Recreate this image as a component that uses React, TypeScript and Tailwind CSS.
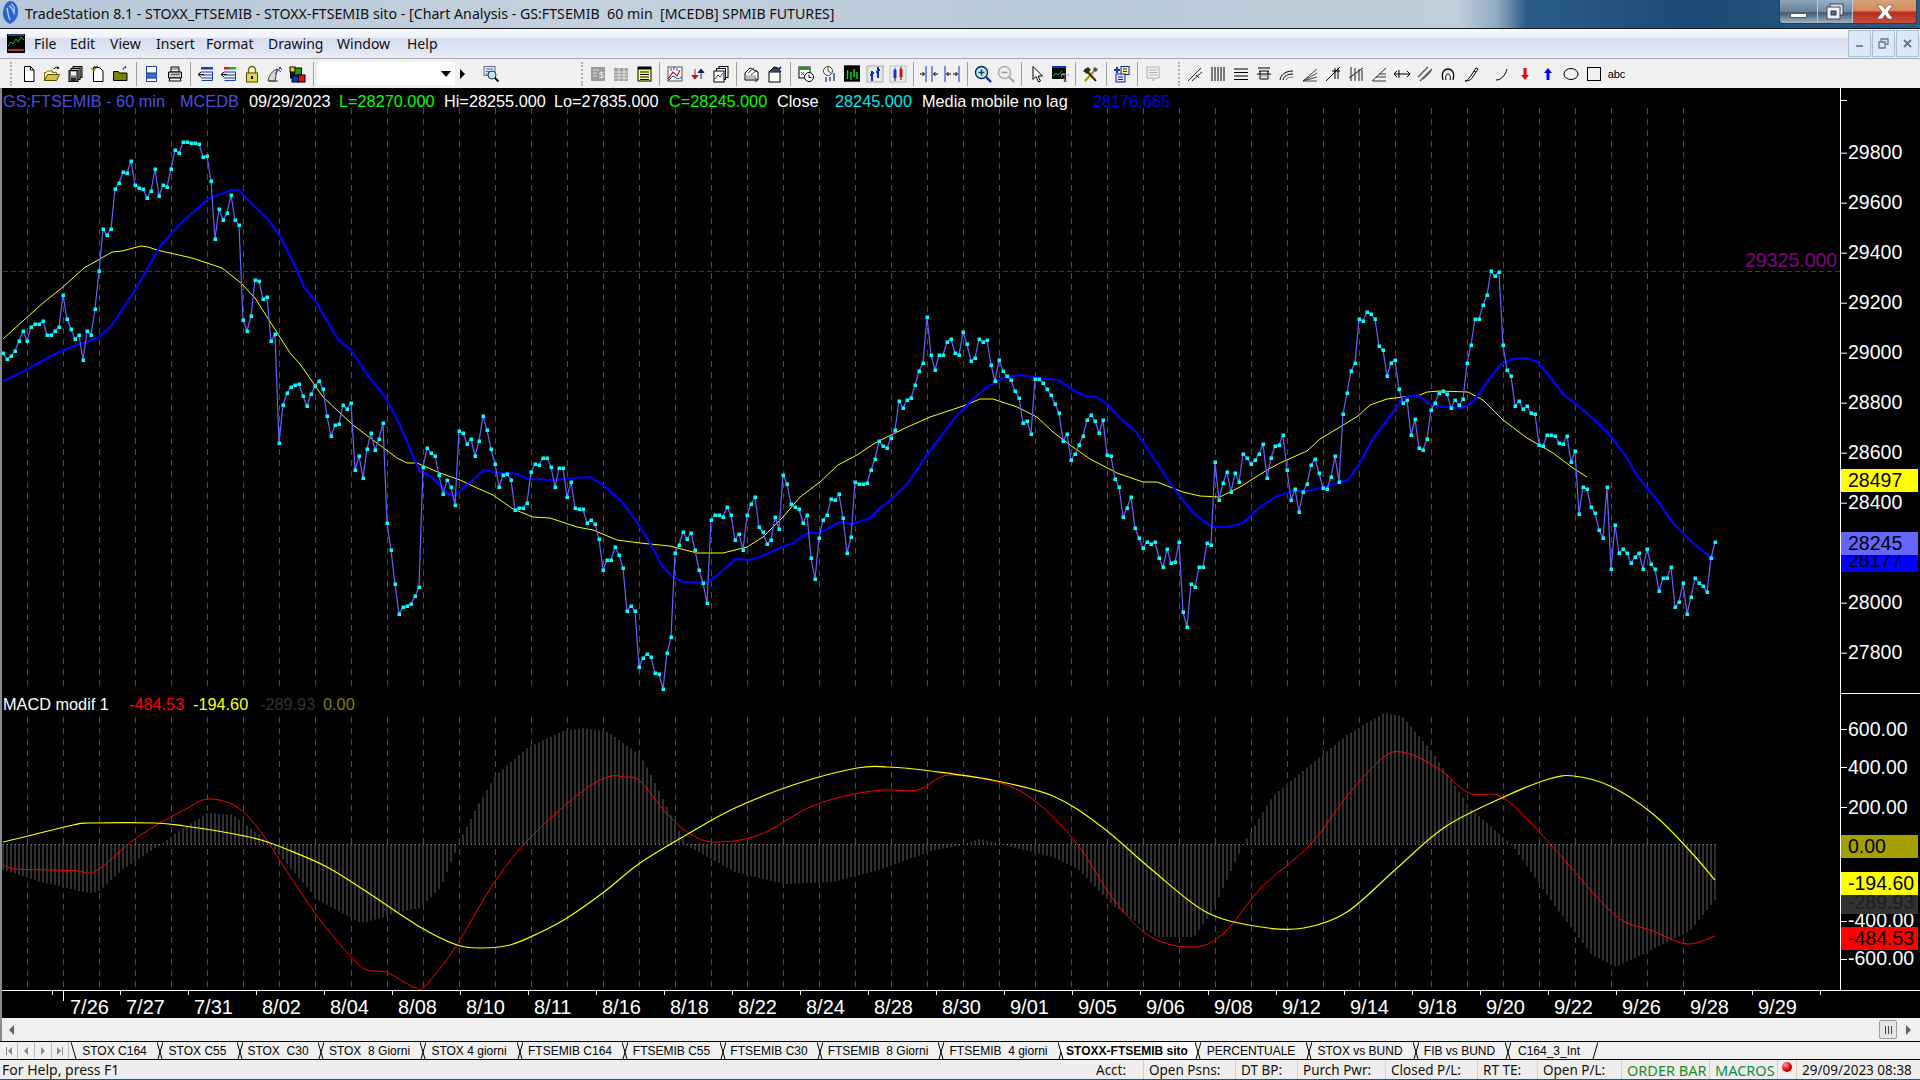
import type { ReactNode } from 'react';

type Pt = [number, number];

// close values, one per bar (bar spacing 4px, first bar at x=3), already in page y
const closes = [
  353,359,356,351,341,331,341,327,324,324,
  321,335,335,331,327,295,319,329,339,335,
  360,331,335,309,271,229,235,229,189,183,
  172,173,161,185,188,189,198,191,169,196,
  185,187,169,150,153,142,142,143,143,144,
  157,156,181,239,209,220,213,195,220,225,
  320,331,316,280,281,299,297,341,334,443,
  405,393,387,385,384,396,406,394,386,381,
  389,416,436,425,424,405,409,403,470,456,
  478,449,433,450,439,423,523,550,584,614,
  607,606,604,596,587,467,448,453,456,475,
  494,480,487,505,431,433,444,439,456,441,
  416,430,449,464,487,475,474,480,510,508,
  508,503,472,464,465,458,458,467,487,468,
  468,497,482,508,509,509,523,520,524,539,
  570,560,560,547,555,568,611,606,611,667,
  658,654,657,673,674,689,653,637,553,545,
  532,539,533,550,570,583,603,520,515,515,
  517,507,515,540,534,550,515,504,497,527,
  532,544,540,517,529,475,484,504,507,509,
  523,515,558,579,538,520,515,499,500,494,
  518,553,537,482,484,484,483,470,459,441,
  446,448,438,430,401,408,400,398,385,371,
  363,317,355,370,355,355,342,339,353,355,
  332,344,361,358,339,342,340,365,381,360,
  371,376,380,391,398,423,421,434,379,379,
  383,389,395,404,413,441,434,460,454,445,
  436,420,415,421,433,420,455,456,479,487,
  517,508,497,528,538,548,542,544,542,558,
  567,549,563,562,542,612,627,584,587,567,
  567,543,545,462,500,483,472,492,473,482,
  454,458,464,460,454,444,478,458,446,445,
  435,470,500,489,512,492,484,465,459,473,
  488,489,477,456,482,414,393,371,363,319,
  321,312,314,319,346,350,376,363,360,389,
  403,400,435,419,448,450,439,410,403,393,
  391,394,408,400,405,399,363,345,319,319,
  305,295,271,276,272,345,370,376,406,401,
  409,406,413,414,445,446,435,435,436,443,
  444,436,462,451,514,487,489,507,513,530,
  538,487,569,525,553,549,553,563,557,553,
  569,549,564,569,591,578,578,567,607,602,
  583,614,597,578,583,586,592,558,542,
];

const blueMa: Pt[] = [[3,381],[12,377],[26,370],[53,355],[71,347],[98,338],[112,325],[135,290],[161,245],[182,222],[208,199],[231,190],[239,190],[253,205],[267,218],[278,233],[294,263],[304,287],[316,302],[339,341],[351,350],[367,374],[385,397],[400,425],[419,470],[433,478],[447,493],[454,496],[467,485],[484,470],[500,473],[518,474],[527,479],[553,480],[572,478],[590,477],[603,485],[622,502],[637,522],[650,543],[663,567],[673,577],[683,582],[707,583],[720,573],[735,559],[750,560],[767,554],[780,548],[793,543],[808,533],[820,533],[840,522],[852,524],[870,518],[880,508],[893,498],[907,484],[927,455],[953,420],[970,402],[987,387],[1003,378],[1020,375],[1040,378],[1058,380],[1073,390],[1085,396],[1097,397],[1107,404],[1120,418],[1137,433],[1153,457],[1173,487],[1193,513],[1212,527],[1227,527],[1243,523],[1260,507],[1277,496],[1293,491],[1310,491],[1323,487],[1348,480],[1360,463],[1372,440],[1387,420],[1403,398],[1417,395],[1428,403],[1443,407],[1462,408],[1473,402],[1487,382],[1500,365],[1512,359],[1527,358],[1537,362],[1550,377],[1563,394],[1577,405],[1597,422],[1610,435],[1627,458],[1638,477],[1657,500],[1673,523],[1693,543],[1710,557],[1715,558]];

const yellowMa: Pt[] = [[3,339],[24,320],[43,303],[63,287],[84,268],[112,252],[122,251],[141,246],[148,247],[157,250],[192,258],[222,268],[241,283],[255,298],[269,320],[290,353],[300,364],[323,397],[353,425],[377,443],[397,458],[407,463],[417,463],[440,473],[460,480],[477,488],[493,495],[513,509],[533,517],[550,518],[577,527],[593,530],[617,540],[640,543],[670,546],[697,553],[723,553],[747,547],[763,537],[783,517],[800,497],[820,482],[838,465],[857,455],[875,443],[903,429],[930,417],[963,406],[980,399],[993,399],[1017,407],[1037,417],[1053,432],[1070,445],[1090,459],[1117,473],[1143,482],[1157,482],[1183,492],[1200,496],[1220,497],[1240,487],[1267,470],[1280,463],[1307,451],[1320,439],[1340,427],[1358,416],[1370,405],[1387,399],[1403,397],[1420,395],[1427,392],[1440,391],[1468,392],[1483,400],[1503,420],[1527,438],[1553,453],[1573,468],[1587,477]];

const histEnv: Pt[] = [[3,870],[41,882],[88,893],[98,892],[122,870],[163,843],[180,830],[208,813],[233,815],[249,827],[269,843],[286,863],[318,900],[359,922],[367,922],[400,912],[420,908],[441,887],[459,843],[478,805],[496,775],[527,748],[563,731],[584,728],[608,732],[640,755],[649,771],[686,845],[735,872],[784,884],[833,882],[882,869],[931,851],[961,845],[980,839],[1004,845],[1053,857],[1078,869],[1114,906],[1157,937],[1194,937],[1212,912],[1243,845],[1273,796],[1310,765],[1347,735],[1384,713],[1402,716],[1433,753],[1470,808],[1512,845],[1555,906],[1592,955],[1616,967],[1653,949],[1690,931],[1715,900]];

const macdRed: Pt[] = [[3,865],[16,869],[53,870],[78,871],[90,873],[102,867],[131,842],[155,826],[184,810],[208,799],[237,807],[261,832],[286,870],[318,917],[351,957],[367,970],[386,972],[404,982],[416,988],[424,987],[445,962],[461,938],[496,880],[531,837],[580,793],[608,777],[624,777],[640,781],[667,814],[692,835],[716,842],[759,835],[808,808],[845,796],[882,790],[918,790],[949,775],[1004,784],[1041,806],[1078,845],[1114,900],[1151,937],[1194,947],[1224,933],[1261,888],[1310,845],[1347,796],[1384,757],[1406,753],[1439,769],[1469,793],[1500,796],[1531,823],[1567,863],[1616,916],[1653,931],[1687,944],[1715,936]];

const macdYellow: Pt[] = [[3,842],[24,837],[73,825],[90,823],[155,823],[184,826],[229,833],[261,840],[286,849],[327,867],[367,892],[420,927],[457,945],[482,948],[510,945],[539,933],[567,918],[604,892],[640,863],[686,835],[735,808],[796,784],[857,768],[888,767],[931,771],[992,780],[1053,796],[1102,827],[1151,869],[1206,912],[1261,927],[1304,928],[1347,912],[1396,869],[1445,827],[1506,796],[1549,779],[1574,776],[1610,786],[1653,814],[1690,851],[1715,880]];

const toPoints = (p: Pt[]) => p.map(([x, y]) => `${x},${y}`).join(' ');

// catmull-rom through the traced points, the macd lines have no corners
function smooth(p: Pt[]) {
  let d = `M${p[0][0]} ${p[0][1]}`;
  for (let i = 0; i < p.length - 1; i++) {
    const a = p[Math.max(i - 1, 0)];
    const b = p[i];
    const c = p[i + 1];
    const e = p[Math.min(i + 2, p.length - 1)];
    const c1x = b[0] + (c[0] - a[0]) / 6;
    const c1y = b[1] + (c[1] - a[1]) / 6;
    const c2x = c[0] - (e[0] - b[0]) / 6;
    const c2y = c[1] - (e[1] - b[1]) / 6;
    d += `C${c1x.toFixed(1)} ${c1y.toFixed(1)} ${c2x.toFixed(1)} ${c2y.toFixed(1)} ${c[0]} ${c[1]}`;
  }
  return d;
}

function interp(p: Pt[], x: number) {
  for (let i = 1; i < p.length; i++) {
    if (x <= p[i][0]) {
      const [x0, y0] = p[i - 1];
      const [x1, y1] = p[i];
      return y0 + ((y1 - y0) * (x - x0)) / (x1 - x0);
    }
  }
  return p[p.length - 1][1];
}

const barX = (i: number) => 3 + i * 4;
const zeroY = 844;
const gridXs = Array.from({ length: 47 }, (_, i) => 27 + i * 36);
const dateTicks = [52, ...Array.from({ length: 26 }, (_, i) => 120 + i * 68)];

const dates = ['7/27','7/31','8/02','8/04','8/08','8/10','8/11','8/16','8/18','8/22','8/24','8/28','8/30','9/01','9/05','9/06','9/08','9/12','9/14','9/18','9/20','9/22','9/26','9/28','9/29'];

function ChartDrawing() {
  const closeLine = closes.map((y, i) => `${barX(i)},${y}`).join(' ');
  const dots = closes.map((y, i) => `M${barX(i) - 1.5} ${y - 1.5}h3.5v3.5h-3.5z`).join('');
  const hist = Array.from({ length: 429 }, (_, i) => {
    const x = barX(i);
    return `M${x} ${zeroY}V${interp(histEnv, x).toFixed(1)}`;
  }).join('');
  return (
    <svg className="absolute inset-0" width={1920} height={930} viewBox="0 88 1920 930">
      <g stroke="#4a4a4a" strokeWidth={1} strokeDasharray="6 5">
        {gridXs.map((x) => (
          <g key={x}>
            <line x1={x + 0.5} x2={x + 0.5} y1={108} y2={690} />
            <line x1={x + 0.5} x2={x + 0.5} y1={717} y2={987} />
          </g>
        ))}
      </g>
      <line x1={3} x2={1840} y1={271.5} y2={271.5} stroke="#7c0f7c" strokeDasharray="5 3" />
      <polyline points={toPoints(yellowMa)} fill="none" stroke="#ffff00" strokeWidth={1} />
      <polyline points={toPoints(blueMa)} fill="none" stroke="#0000ff" strokeWidth={2.2} />
      <polyline points={closeLine} fill="none" stroke="#6464ff" strokeWidth={1.2} />
      <path d={dots} fill="#00ffff" />

      <path d={hist} stroke="#303030" strokeWidth={2} fill="none" />
      <line x1={3} x2={1717} y1={zeroY + 0.5} y2={zeroY + 0.5} stroke="#a0a000" strokeDasharray="1 3" />
      <path d={smooth(macdRed)} fill="none" stroke="#ff0000" strokeWidth={1} />
      <path d={smooth(macdYellow)} fill="none" stroke="#ffff00" strokeWidth={1.2} />

      <line x1={1840.5} x2={1840.5} y1={88} y2={990} stroke="#fff" />
      <line x1={1840} x2={1920} y1={693.5} y2={693.5} stroke="#fff" />
      <line x1={2} x2={1920} y1={990.5} y2={990.5} stroke="#fff" />
      <g stroke="#fff">
        {[152.7, 202.7, 252.7, 302.7, 352.7, 402.7, 452.7, 502.7, 602.7, 652.7, 729, 767, 807, 921, 959, 100].map((y) => (
          <line key={y} x1={1841} x2={1847} y1={y + 0.5} y2={y + 0.5} />
        ))}
        {dateTicks.map((x) => (
          <line key={x} x1={x + 0.5} x2={x + 0.5} y1={990} y2={995} />
        ))}
        <line x1={63.5} x2={63.5} y1={990} y2={1001} />
      </g>
    </svg>
  );
}

type AxisLabel = { y: number; t: string; bg?: string; fg?: string };

// drawn in this order, so later boxes clip the ones before them
const axisLabels: AxisLabel[] = [
  { y: 152.7, t: '29800' },{ y: 202.7, t: '29600' },{ y: 252.7, t: '29400' },{ y: 302.7, t: '29200' },
  { y: 352.7, t: '29000' },{ y: 402.7, t: '28800' },{ y: 452.7, t: '28600' },{ y: 502.7, t: '28400' },
  { y: 602.7, t: '28000' },{ y: 652.7, t: '27800' },
  { y: 480.5, t: '28497', bg: '#ffff00', fg: '#000' },
  { y: 560.5, t: '28177', bg: '#0000ff', fg: '#000' },
  { y: 543.5, t: '28245', bg: '#6666ff', fg: '#000' },
  { y: 729, t: '600.00' },{ y: 767, t: '400.00' },{ y: 807, t: '200.00' },
  { y: 920.5, t: '-400.00' },{ y: 958.5, t: '-600.00' },
  { y: 846.5, t: '0.00', bg: '#a3a000', fg: '#000' },
  { y: 902.5, t: '-289.93', bg: '#333333', fg: '#1c1c1c' },
  { y: 883.5, t: '-194.60', bg: '#ffff00', fg: '#000' },
  { y: 938.5, t: '-484.53', bg: '#ff0000', fg: '#000' },
];

function AxisLabels() {
  return (
    <>
      {axisLabels.map((l) => (
        <div
          key={l.t}
          className="absolute left-[1841px] w-[77px] h-[23px] pl-[7px] text-[19.5px] leading-[23px] whitespace-nowrap"
          style={{ top: l.y - 11.5 - 88, background: l.bg, color: l.fg ?? '#fff' }}
        >
          {l.t}
        </div>
      ))}
    </>
  );
}

const mainLegend: [string, string, string][] = [
  ['GS:FTSEMIB - 60 min', '#4a50dc', 'w-[177px]'],
  ['MCEDB', '#4a50dc', 'w-[69px]'],
  ['09/29/2023', '#ffffff', 'w-[90px]'],
  ['L=28270.000', '#00ff00', 'w-[105px]'],
  ['Hi=28255.000', '#ffffff', 'w-[110px]'],
  ['Lo=27835.000', '#ffffff', 'w-[115px]'],
  ['C=28245.000', '#00ff00', 'w-[108px]'],
  ['Close', '#ffffff', 'w-[58px]'],
  ['28245.000', '#00e8e8', 'w-[87px]'],
  ['Media mobile no lag', '#ffffff', 'w-[171px]'],
  ['28176.665', '#0000e6', 'w-[90px]'],
];

const macdLegend: [string, string, string][] = [
  ['MACD modif 1', '#ffffff', 'w-[126px]'],
  ['-484.53', '#ff0000', 'w-[64px]'],
  ['-194.60', '#ffff00', 'w-[67px]'],
  ['-289.93', '#333333', 'w-[63px]'],
  ['0.00', '#808000', 'w-[40px]'],
];

function Legend({ items, top }: { items: [string, string, string][]; top: string }) {
  return (
    <div className={`absolute left-[3px] flex text-[16.3px] leading-[20px] whitespace-nowrap ${top}`}>
      {items.map(([t, c, w]) => (
        <span key={t} className={w} style={{ color: c }}>
          {t}
        </span>
      ))}
    </div>
  );
}

const S = { stroke: '#000', fill: 'none' };

const icons: Record<string, ReactNode> = {
  newDoc: <><path d="M4.5 1.5h6l3.5 3.5v11.500h-9.500z" fill="#fff" stroke="#000" /><path d="M10.500 1.500v3.500h3.500" {...S} /></>,
  open: <><path d="M1.500 15.500v-8h2l1-1.500h5v1.500h4v2" fill="#fff8c0" stroke="#7a6a00" /><path d="M1.500 15.500l3-6h12l-3 6z" fill="#d8c040" stroke="#5a4a00" /><path d="M11 4c1-2 3-2 5-1m0 0l-1.500-1.500m1.500 1.500l-2 .5" {...S} /></>,
  copies: <><rect x="7" y="1.500" width="9" height="11" fill="#999" stroke="#000" /><rect x="5" y="3.500" width="9" height="11" fill="#bbb" stroke="#000" /><rect x="3" y="5.500" width="9" height="11" fill="#777" stroke="#000" /><rect x="5" y="6.500" width="5" height="4" fill="#eee" /><rect x="5" y="13" width="5" height="3.500" fill="#222" /></>,
  checkDoc: <><path d="M4.500 2.500h6l3.500 3.500v10.500h-9.500z" fill="#fff" stroke="#000" /><path d="M2 3l3 2.500 3-4" stroke="#a09000" strokeWidth={1.5} fill="none" /><path d="M5 2h4" stroke="#000" /></>,
  olive: <><path d="M1.500 15.500v-9h5l1 1.500h7.500v7.500z" fill="#808000" stroke="#000" /><path d="M11 5c0-2 1-3 3-3l-1 -1m1 1l-1 1.500" stroke="#1030a0" fill="none" /></>,
  preview: <><path d="M3.500 1.500h10v15h-10z" fill="#fff" stroke="#1a3fa0" /><rect x="3.500" y="8" width="10" height="5" fill="#2f6fd8" /><path d="M3.500 8h10M3.500 13h10" stroke="#123080" /></>,
  print: <><path d="M5 2h8v5h-8z" fill="#fff" stroke="#000" /><path d="M2.500 7h13v6h-13z" fill="#c8c8c8" stroke="#000" /><path d="M4 13l-1 3h12l-1-3z" fill="#fff" stroke="#000" /><path d="M5 4h8M5 9.500h8" stroke="#555" /><rect x="12" y="8" width="2" height="1" fill="#d0a000" /></>,
  winBack: <><rect x="4" y="2" width="12" height="2.500" fill="#1a3fb0" /><path d="M4 7h12M4 10h12M4 13h12" stroke="#1a3fb0" /><path d="M15.500 7v8.500h-11" stroke="#1a3fb0" fill="none" /><path d="M1 9.500h6M1 9.500l3-2.500M1 9.500l3 2.500" stroke="#000" fill="none" /></>,
  winColor: <><rect x="4" y="2" width="6" height="2.500" fill="#e02020" /><rect x="10" y="2" width="6" height="2.500" fill="#20b020" /><path d="M4 7h12M4 10h12M4 13h12" stroke="#1a3fb0" /><path d="M15.500 7v8.500h-11" stroke="#1a3fb0" fill="none" /><path d="M1 9.500h6M1 9.500l3-2.500M1 9.500l3 2.500" stroke="#000" fill="none" /></>,
  lock: <><path d="M5.500 8v-3a3.500 3.500 0 0 1 7 0v3" stroke="#707000" strokeWidth={1.5} fill="none" /><rect x="3.500" y="8" width="11" height="9" fill="#e6d840" stroke="#505000" /><rect x="8" y="11" width="2" height="3" fill="#000" /></>,
  dish: <><path d="M2 16c1-6 4-10 9-12l-2 12z" fill="#d8d8d8" stroke="#444" /><path d="M9 9l6-7M11 4l4 3M13 2l3 3" stroke="#1a3fa0" fill="none" /><path d="M3 16h9" stroke="#333" /></>,
  cubes: <><rect x="1.500" y="7" width="6" height="6" fill="#101060" stroke="#000" /><rect x="5.500" y="3" width="7" height="7" fill="#18a018" stroke="#000" /><rect x="1" y="2" width="5" height="5" fill="#f0d000" stroke="#000" /><rect x="9" y="10" width="7" height="7" fill="#e01010" stroke="#000" /><rect x="3" y="11" width="6.500" height="6" fill="#1030d0" stroke="#000" /></>,
  report: <><rect x="2" y="1.500" width="11" height="9" fill="#dde6f5" stroke="#607090" /><path d="M4 4h7M4 6.500h7M4 9h4" stroke="#5a6a90" /><circle cx="10" cy="10" r="4" fill="#bfe8f5" stroke="#203060" /><path d="M13 13l3.500 3.500" stroke="#000" strokeWidth={2} /></>,
  calcG: <><rect x="2" y="2" width="14" height="14" fill="#9a9a9a" /><path d="M4 5h6M4 8h4M4 11h4" stroke="#ddd" /><text x="10" y="13" fontSize="9" fill="#eee">$</text></>,
  tableG: <><rect x="2" y="3" width="14" height="13" fill="#a0a0a0" /><path d="M2 7h14M2 10h14M2 13h14M7 3v13M12 3v13" stroke="#e4e4e4" /></>,
  sheet: <><rect x="3" y="2" width="13" height="14" fill="#ffff80" stroke="#000" /><rect x="3" y="2" width="13" height="2.500" fill="#000" /><path d="M5 7h9M5 9.500h9M5 12h9M5 14.500h9" stroke="#000" /></>,
  hatLine: <><rect x="2" y="2" width="14" height="14" fill="#fff" stroke="#555" /><path d="M2 14l5-7 4 4 3-6" stroke="#c02020" fill="none" strokeWidth={1.3} /><path d="M2 16l5-5 5 3 4-2" stroke="#1a3fa0" fill="none" /><path d="M5 3v3M8 2v3M11 3v3" stroke="#2040c0" /></>,
  updown: <><path d="M6 4v9M3 10.500l3 3.500 3-3.500z" stroke="#c01010" fill="#c01010" /><path d="M12 14v-9M9 7.500l3-3.500 3 3.500z" stroke="#102080" fill="#102080" /></>,
  stacked: <><rect x="7" y="1.500" width="9" height="11" fill="#fff" stroke="#000" /><rect x="4.500" y="3.500" width="9" height="11" fill="#fff" stroke="#000" /><rect x="2" y="6" width="10" height="11" fill="#fff" stroke="#000" /><path d="M3 14l3-4 2 2 3-4" stroke="#1a3fa0" fill="none" /></>,
  pageEdit: <><path d="M2 8l5-5 8 4v8h-13z" fill="#fff" stroke="#000" /><path d="M5 8l6-5M8 10l6-5" stroke="#444" /><path d="M3 11h10M3 13h10" stroke="#777" /><path d="M12 13l3 2-3 2" stroke="#1a3fa0" fill="none" /></>,
  flagDoc: <><rect x="3" y="7" width="11" height="10" fill="#fff" stroke="#000" /><path d="M3 7l5-5 4 1 3 4" fill="#444" stroke="#000" /><path d="M11 6l4-4" stroke="#1a3fa0" strokeWidth={2} /></>,
  calendar: <><rect x="2" y="2" width="11" height="11" fill="#fff" stroke="#000" /><rect x="2" y="2" width="11" height="3" fill="#18a018" /><path d="M4 7l3 3M7 7l-3 3" stroke="#d01010" /><circle cx="12" cy="12" r="4.500" fill="#fff" stroke="#000" /><path d="M12 9.500v3h2.500" {...S} /></>,
  probe: <><circle cx="8" cy="6" r="4.500" fill="#fff" stroke="#444" /><path d="M8 6V2M8 6l3 2" stroke="#444" /><path d="M6 12v5M10 12v4M14 8v8" stroke="#3050a0" strokeWidth={1.5} /></>,
  blackChart: <><rect x="1" y="1" width="16" height="16" fill="#000" /><path d="M4.500 5v9M8 7v8M11 4v8M14 7v7" stroke="#10e010" strokeWidth={1.4} /><path d="M1 16.500h16M1 .500h16" stroke="#e01010" /></>,
  blueBars: <><rect x="1" y="1" width="16" height="16" fill="#e8e8e8" stroke="#aaa" /><path d="M6 6v10M4 10h2M6 8h2M12 2v11M10 7h2M12 5h2" stroke="#1030b0" strokeWidth={2} /></>,
  candles: <><rect x="1" y="1" width="16" height="16" fill="#ececec" stroke="#bbb" /><path d="M6 3v13M12 2v13" stroke="#111" /><rect x="4.500" y="5" width="3" height="8" fill="#1030d0" /><rect x="10.500" y="4" width="3" height="8" fill="#d01010" /></>,
  arrowsIn: <><path d="M6 1v16M12 1v16" stroke="#1030c0" /><path d="M0 9h4.500M4.500 9l-2-2M4.500 9l-2 2M18 9h-4.500M13.500 9l2-2M13.500 9l2 2" stroke="#000" fill="none" /></>,
  arrowsOut: <><path d="M2 1v16M16 1v16" stroke="#1030c0" /><path d="M8 9h-4.500M3.500 9l2-2M3.500 9l2 2M10 9h4.500M14.500 9l-2-2M14.500 9l-2 2" stroke="#000" fill="none" /></>,
  zoomIn: <><circle cx="7.500" cy="7.500" r="6" fill="#bfe8f5" stroke="#102050" strokeWidth={1.4} /><path d="M4.500 7.500h6M7.500 4.500v6" stroke="#005050" strokeWidth={1.5} /><path d="M12 12l5 5" stroke="#1030a0" strokeWidth={2.4} /></>,
  zoomOut: <><circle cx="7.500" cy="7.500" r="6" fill="#eee" stroke="#aaa" strokeWidth={1.4} /><path d="M4.500 7.500h6" stroke="#999" strokeWidth={1.5} /><path d="M12 12l5 5" stroke="#aaa" strokeWidth={2.4} /></>,
  cursor: <path d="M5 1.500v13l3-3 2.500 5.500 2-1-2.500-5h4.500z" fill="#fff" stroke="#000" />,
  chartT: <><rect x="1" y="1" width="14" height="13" fill="#000" /><rect x="1" y="1" width="14" height="2" fill="#1030e0" /><path d="M2 11l3-3 2 2 4-4" stroke="#10d010" fill="none" /><text x="10" y="17" fontSize="12" fontWeight="700" fontFamily="Liberation Serif, serif" fill="#000" stroke="#fff" strokeWidth={0.3}>T</text></>,
  tools: <><path d="M3 16L14 4" stroke="#c09000" strokeWidth={2.4} /><path d="M3 4l11 12" stroke="#303000" strokeWidth={2} /><path d="M1 6l5-4 3 3-4 4z" fill="#303000" /><path d="M12 2l4 2-2 3-3-2z" fill="#505050" /></>,
  flagBlue: <><rect x="8" y="1.500" width="8" height="8" fill="#fff48c" stroke="#102080" /><path d="M10 4h4M10 6.500h4" stroke="#102080" /><path d="M1 5h6M4 2v6" stroke="#1030e0" strokeWidth={2} /><rect x="3" y="9" width="9" height="8" fill="#d6e4f8" stroke="#102080" /><path d="M5 12h5M5 14.500h5" stroke="#102080" /></>,
  bubbleG: <><path d="M3 2h12v11h-4l-2 3v-3h-6z" fill="#f4f4f4" stroke="#aaa" /><path d="M5 5h8M5 7.500h8M5 10h8" stroke="#aaa" /></>,
  trend: <><path d="M2 16L15 3M6 16L16 7" stroke="#222" /><path d="M10 10l3 3" stroke="#222" /></>,
  vlines: <path d="M3 2v14M6 2v14M9 2v14M12 2v14M15 2v14" stroke="#000" />,
  hlines: <path d="M2 4h14M2 7.500h14M2 11h14M2 14.500h14" stroke="#000" />,
  boxes: <><path d="M3 3h12M4 6h10M2 9h14" stroke="#000" /><path d="M5 6v8h8v-8" stroke="#000" fill="none" /><path d="M5 11h8" stroke="#888" /></>,
  arcs: <><path d="M2 15c1-6 6-9 13-9" stroke="#000" fill="none" /><path d="M5 15c1-4 4-6 10-6" stroke="#000" fill="none" /><path d="M8 15c1-2 3-3 7-3" stroke="#777" fill="none" /></>,
  fan: <path d="M2 16L16 4M2 16L16 8M2 16L16 12M2 16h14" stroke="#444" fill="none" />,
  steps: <path d="M2 16L16 2M11 3v11M14 3v11M8 6h8" stroke="#000" fill="none" />,
  vfan: <path d="M4 2v14M8 3v13M12 4v12M15 5v11M2 13L16 3" stroke="#222" fill="none" />,
  fib: <path d="M2 16L16 3M3 16h13M6 12h10M9 9h7" stroke="#333" fill="none" />,
  hArrow: <path d="M1 9h16M1 9l3-3M1 9l3 3M17 9l-3-3M17 9l-3 3M6 5v8" stroke="#000" fill="none" />,
  channel: <path d="M2 12L12 2M4 16L16 4M7 14L15 6" stroke="#555" strokeWidth={1.4} fill="none" />,
  horse: <><path d="M4 15c-2-5 0-11 5-11s7 6 5 11" stroke="#000" fill="none" strokeWidth={1.3} /><path d="M7 15c-1-3 0-6 2-6s3 3 2 6" stroke="#000" fill="none" /></>,
  pen: <><path d="M3 16c3 0 3-3 5-4l6-9 2 1-6 9c-1 2-4 3-7 3z" fill="#fff" stroke="#000" /><path d="M12 6l2 1" stroke="#000" /></>,
  curve: <path d="M3 15c5 0 9-4 11-11" stroke="#000" fill="none" />,
  down: <path d="M7.500 3h3v7h2.500l-4 5-4-5h2.500z" fill="#f00000" />,
  up: <path d="M7.500 15h3v-7h2.500l-4-5-4 5h2.500z" fill="#0000f0" />,
  ellipse: <ellipse cx="9" cy="9" rx="7" ry="5.500" fill="none" stroke="#000" />,
  square: <rect x="2.500" y="2.500" width="13" height="13" fill="none" stroke="#000" />,
};

function Tool({ name }: { name: string }) {
  return (
    <div className="w-[23px] h-[22px] flex items-center justify-center shrink-0">
      <svg width={18} height={18} viewBox="0 0 18 18">
        {icons[name]}
      </svg>
    </div>
  );
}

function Sep() {
  return (
    <div className="w-[8px] h-[24px] flex justify-center shrink-0">
      <div className="w-px h-full bg-[#a0a0a0]" />
    </div>
  );
}

function Gripper() {
  return (
    <div className="w-[8px] h-[24px] flex justify-center shrink-0">
      <div className="w-[2px] h-full border-l-2 border-dotted border-[#b0b0b0]" />
    </div>
  );
}

function ToolGroup({ names }: { names: string[] }) {
  return (
    <>
      {names.map((n, i) => (n === '|' ? <Sep key={i} /> : <Tool key={i} name={n} />))}
    </>
  );
}

function Toolbar() {
  return (
    <div className="h-[30px] bg-[#f0f0f0] flex items-center pl-[17px] border-t border-[#a8a8a8] relative">
      <div className="absolute left-[7px] top-[3px]">
        <Gripper />
      </div>
      <ToolGroup names={['newDoc','open','copies','checkDoc','olive','|','preview','print','|','winBack','winColor','lock','dish','cubes','|']} />
      <div className="w-[138px] h-[23px] bg-white rounded-[2px] flex items-center justify-end pr-[4px] shrink-0">
        <div className="w-0 h-0 border-x-[5px] border-x-transparent border-t-[6px] border-t-black" />
      </div>
      <div className="w-[14px] flex justify-center shrink-0">
        <div className="w-0 h-0 border-y-[5px] border-y-transparent border-l-[5px] border-l-black" />
      </div>
      <div className="ml-[10px]">
        <Tool name="report" />
      </div>
      <div className="ml-[76px]">
        <Gripper />
      </div>
      <ToolGroup names={['calcG','tableG','sheet','|','hatLine','updown','stacked','|','pageEdit','flagDoc','|','calendar','probe','blackChart','blueBars','candles','|','arrowsIn','arrowsOut','|','zoomIn','zoomOut','|','cursor','chartT','|','tools','|','flagBlue','|','bubbleG']} />
      <div className="ml-[11px]">
        <Gripper />
      </div>
      <ToolGroup names={['trend','vlines','hlines','boxes','arcs','fan','steps','vfan','fib','hArrow','channel','horse','pen']} />
      <div className="ml-[8px] flex">
        <ToolGroup names={['curve','down','up','ellipse','square']} />
        <div className="w-[23px] text-center text-[11px] leading-[22px] font-['Liberation_Sans',sans-serif] text-black">abc</div>
      </div>
    </div>
  );
}

const menus: [string, string][] = [
  ['File', 'w-[36px]'], ['Edit', 'w-[40px]'], ['View', 'w-[46px]'], ['Insert', 'w-[50px]'],
  ['Format', 'w-[62px]'], ['Drawing', 'w-[69px]'], ['Window', 'w-[70px]'], ['Help', 'w-[40px]'],
];

function TitleBar() {
  return (
    <div className="h-[29px] border-b border-[#101820] flex items-start bg-[linear-gradient(90deg,#b6c7d9_0%,#c4d0dd_30%,#b9cad9_55%,#c0ceda_76%,#8fa9c2_78%,#2b5c88_79.5%,#1d4a74_88%,#2a5b82_100%)]">
      <svg width={20} height={26} viewBox="0 0 20 26" className="ml-[1px] shrink-0">
        <path d="M9 1c5 0 8 5 8 10 0 6-3 11-8 13-5-2-8-7-7-13 1-5 3-9 7-10z" fill="#2a63c8" />
        <path d="M10 4c3 1 4 5 3 9-1-3-2-6-5-7M6 8c1 4 1 8 3 12" stroke="#9fd0ff" strokeWidth={1.5} fill="none" />
      </svg>
      <div className="ml-[4px] text-[14.2px] leading-[28px] text-[#111] whitespace-nowrap font-['Noto_Sans',sans-serif]">
        TradeStation 8.1 - STOXX_FTSEMIB - STOXX-FTSEMIB sito - [Chart Analysis - GS:FTSEMIB&nbsp; 60 min&nbsp; [MCEDB] SPMIB FUTURES]
      </div>
      <div className="ml-auto mr-[3px] flex h-[24px] rounded-b-[4px] border border-t-0 border-[#2c3e50] overflow-hidden shrink-0">
        <div className="w-[38px] flex items-end justify-center pb-[5px] bg-[linear-gradient(180deg,#8ea4b8,#6a8296_50%,#3e5a72_55%,#a3b5c4)] border-r border-[#b8c8d4]">
          <div className="w-[17px] h-[5px] bg-white border border-[#556] rounded-[1px]" />
        </div>
        <div className="w-[35px] flex items-center justify-center bg-[linear-gradient(180deg,#9ab0c2,#6f8ba2_50%,#3c5c76_55%,#a0b2c0)] border-r border-[#b8c8d4]">
          <svg width={20} height={18} viewBox="0 0 20 18">
            <rect x="5" y="1" width="13" height="11" fill="#dce4ea" stroke="#445" />
            <rect x="2" y="4" width="13" height="12" fill="#eef2f5" stroke="#445" />
            <rect x="6" y="8" width="5" height="4" fill="#52708a" stroke="#334" />
          </svg>
        </div>
        <div className="w-[63px] flex items-center justify-center bg-[linear-gradient(180deg,#d9a27a,#d68a5c_45%,#b82a20_55%,#c8503a)]">
          <svg width={20} height={16} viewBox="0 0 20 16">
            <path d="M2 1h5l3 4 3-4h5l-5 7 5 7h-5l-3-4-3 4h-5l5-7z" fill="#fff" stroke="#7a4a40" strokeWidth={0.7} />
          </svg>
        </div>
      </div>
    </div>
  );
}

function MdiButton({ children }: { children: ReactNode }) {
  return (
    <div className="w-[23px] h-[27px] bg-[#dbe8f7] border border-[#a9bfd6] flex items-center justify-center">
      <svg width={11} height={11} viewBox="0 0 11 11">
        {children}
      </svg>
    </div>
  );
}

function MenuBar() {
  return (
    <div className="h-[29px] flex items-center bg-[linear-gradient(180deg,#f7f8fa_0%,#f0f3f8_28%,#d7deef_32%,#dde3f2_70%,#e9edf7_100%)] font-['Noto_Sans',sans-serif] text-[14px] text-[#111]">
      <svg width={18} height={19} viewBox="0 0 18 19" className="ml-[7px] mr-[9px] shrink-0">
        <rect width="18" height="19" fill="#000" />
        <path d="M1 12l3-4 2 2 3-5 2 3 3-5 3 3" stroke="#10c010" fill="none" />
        <path d="M1 16h16" stroke="#b03030" strokeWidth={2} />
        <path d="M1 1h16" stroke="#2040a0" strokeWidth={2} />
      </svg>
      {menus.map(([t, w]) => (
        <span key={t} className={w}>
          {t}
        </span>
      ))}
      <div className="ml-auto mr-[1px] flex gap-px">
        <MdiButton><rect x="2" y="7" width="7" height="2" fill="#7a8794" /></MdiButton>
        <MdiButton><path d="M3 3V1h7v5H8M1 4h6v6H1z" fill="none" stroke="#6a7784" strokeWidth={1.3} /></MdiButton>
        <MdiButton><path d="M2 2l7 7M9 2l-7 7" stroke="#6a7784" strokeWidth={2} /></MdiButton>
      </div>
    </div>
  );
}

function ScrollBar() {
  return (
    <div className="h-[23px] bg-[#f0f0f0] flex items-center border-l-2 border-[#8a8a8a]">
      <div className="ml-[7px] w-0 h-0 border-y-[5px] border-y-transparent border-r-[5px] border-r-[#606060]" />
      <div className="ml-auto w-[18px] h-[19px] bg-[#e4e4e4] border border-[#9a9a9a] rounded-[2px] flex items-center justify-center gap-[2px]">
        <div className="w-px h-[8px] bg-[#444]" />
        <div className="w-px h-[8px] bg-[#444]" />
        <div className="w-px h-[8px] bg-[#444]" />
      </div>
      <div className="ml-[9px] mr-[9px] w-0 h-0 border-y-[5px] border-y-transparent border-l-[5px] border-l-[#606060]" />
    </div>
  );
}

const tabs: [string, number][] = [
  ['STOX C164', 86], ['STOX C55', 80], ['STOX\u00a0 C30', 81], ['STOX\u00a0 8 Giorni', 102], ['STOX 4 giorni', 97],
  ['FTSEMIB C164', 105], ['FTSEMIB C55', 98], ['FTSEMIB C30', 97], ['FTSEMIB\u00a0 8 Giorni', 121], ['FTSEMIB\u00a0 4 giorni', 120],
  ['STOXX-FTSEMIB sito', 137], ['PERCENTUALE', 111], ['STOX vs BUND', 107], ['FIB vs BUND', 92], ['C164_3_Int', 87],
];

function Tab({ label, width, active }: { label: string; width: number; active: boolean }) {
  return (
    <div
      className={`relative h-[17px] shrink-0 flex items-center justify-center whitespace-nowrap text-[12px] text-black ${active ? 'font-bold' : ''}`}
      style={{ width }}
    >
      <svg className="absolute top-0 left-0" width={width + 6} height={17} viewBox={`0 0 ${width + 6} 17`}>
        {active && <path d={`M0 0L5 17H${width + 1}L${width + 6} 0Z`} fill="#fff" />}
        <path d={`M0 0L5 17M${width + 1} 17L${width + 6} 0`} stroke="#000" fill="none" />
      </svg>
      <span className="relative pl-[1px]">{label}</span>
    </div>
  );
}

function TabStrip() {
  return (
    <div className="h-[18px] bg-[#f0f0f0] border-t border-black flex items-stretch">
      <div className="w-[71px] flex shrink-0 pl-[1px]">
        {['first', 'prev', 'next', 'last'].map((k) => (
          <div key={k} className="w-[17px] border-r border-[#bbb] flex items-center justify-center gap-px">
            {k === 'first' && <div className="w-px h-[8px] bg-[#888]" />}
            {(k === 'first' || k === 'prev') && (
              <div className="w-0 h-0 border-y-[4px] border-y-transparent border-r-[4px] border-r-[#888]" />
            )}
            {(k === 'next' || k === 'last') && (
              <div className="w-0 h-0 border-y-[4px] border-y-transparent border-l-[4px] border-l-[#888]" />
            )}
            {k === 'last' && <div className="w-px h-[8px] bg-[#888]" />}
          </div>
        ))}
      </div>
      {tabs.map(([t, w]) => (
        <Tab key={t} label={t} width={w} active={t === 'STOXX-FTSEMIB sito'} />
      ))}
    </div>
  );
}

const statusCells: [string, string, string][] = [
  ['Acct:', 'w-[52px]', 'text-[#111]'],
  ['Open Psns:', 'w-[92px]', 'text-[#111]'],
  ['DT BP:', 'w-[62px]', 'text-[#111]'],
  ['Purch Pwr:', 'w-[88px]', 'text-[#111]'],
  ['Closed P/L:', 'w-[92px]', 'text-[#111]'],
  ['RT TE:', 'w-[60px]', 'text-[#111]'],
  ['Open P/L:', 'w-[84px]', 'text-[#111]'],
  ['ORDER BAR', 'w-[88px]', 'text-[#1f8a1f] text-[14.5px]'],
  ['MACROS', 'w-[68px]', 'text-[#0c8a4a] text-[14.5px]'],
];

function StatusBar() {
  return (
    <div className="h-[20px] bg-[#f0eeec] border-t border-black flex items-center font-['Noto_Sans',sans-serif] text-[13.5px] whitespace-nowrap overflow-hidden">
      <div className="flex-1 pl-[2px] text-[14px] leading-[21px] text-[#111]">For Help, press F1</div>
      {statusCells.map(([t, w, c], i) => (
        <div key={t} className={`${w} ${c} h-full pl-[5px] leading-[21px] ${i === 0 ? '' : 'border-l border-[#d4d0cc]'}`}>
          {t}
        </div>
      ))}
      <div className="w-[19px] h-full border-l border-[#d4d0cc] flex items-start justify-center pt-[2px]">
        <div className="w-[10px] h-[10px] rounded-full bg-[radial-gradient(circle_at_35%_30%,#ff9a9a,#e00000_55%,#800000)]" />
      </div>
      <div className="w-[124px] h-full pl-[5px] leading-[21px] border-l border-[#d4d0cc] text-[#111]">29/09/2023 08:38</div>
    </div>
  );
}

export default function App() {
  return (
    <div className="w-[1920px] h-[1080px] overflow-hidden flex flex-col bg-[#f0f0f0] font-['Liberation_Sans',Arial,sans-serif]">
      <TitleBar />
      <MenuBar />
      <Toolbar />
      <div className="relative h-[930px] bg-black shrink-0 border-l-2 border-[#8a8a8a] box-border">
        <div className="absolute -left-[2px] top-0 w-[1920px] h-[930px]">
          <ChartDrawing />
          <Legend items={mainLegend} top="top-[3px]" />
          <div className="absolute left-[1745px] top-[160px] text-[19.5px] leading-[24px] text-[#800080]">29325.000</div>
          <Legend items={macdLegend} top="top-[606px]" />
          <AxisLabels />
          <div className="absolute left-0 top-[907px] flex text-[20px] leading-[24px] text-white">
            <span className="ml-[70px] w-[56px]">7/26</span>
            {dates.map((d) => (
              <span key={d} className="w-[68px]">
                {d}
              </span>
            ))}
          </div>
        </div>
      </div>
      <ScrollBar />
      <TabStrip />
      <StatusBar />
      <div className="flex-1 bg-[#31506e]" />
    </div>
  );
}
